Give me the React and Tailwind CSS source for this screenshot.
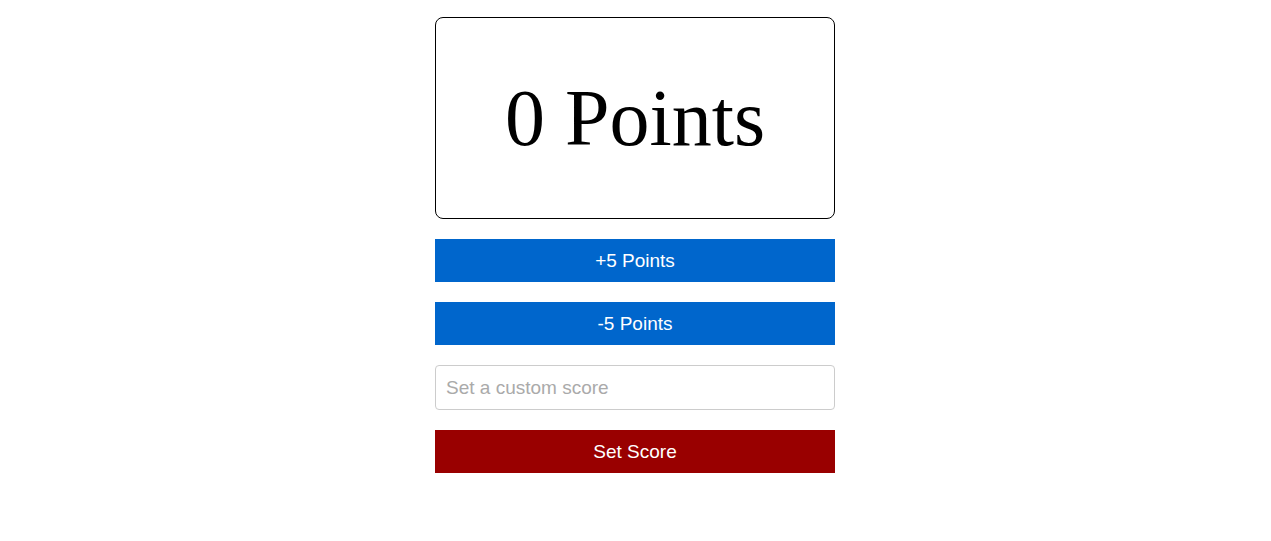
import React, { useState } from 'react';

export default function App() {
    const [score, setScore] = useState(0);
    const [custom, setCustom] = useState('');

    const btn = "w-full h-[43px] pt-[2px] flex items-center justify-center text-white text-[19px] font-['Liberation_Sans',Arial,sans-serif]";

    return (
        <div className="min-h-[541px] bg-white pr-px">
            <div className="w-[400px] mx-auto pt-[17px] flex flex-col gap-5">
                {/* Score display */}
                <div className="h-[202px] border border-black rounded-lg flex items-center justify-center">
                    <span className="text-[80px] leading-none text-black font-['Liberation_Serif','Times_New_Roman',serif]">
                        {score} Points
                    </span>
                </div>

                <button className={`${btn} bg-[#0066cc]`} onClick={() => setScore(score + 5)}>
                    +5 Points
                </button>
                <button className={`${btn} bg-[#0066cc]`} onClick={() => setScore(score - 5)}>
                    -5 Points
                </button>

                <input
                    type="text"
                    value={custom}
                    onChange={(e) => setCustom(e.target.value)}
                    placeholder="Set a custom score"
                    className="w-full h-[45px] px-[10px] border border-[#cccccc] rounded text-[19px] text-black placeholder:text-[#aaaaaa] outline-none font-['Liberation_Sans',Arial,sans-serif]"
                />

                <button
                    className={`${btn} bg-[#990000]`}
                    onClick={() => {
                        const n = parseInt(custom, 10);
                        if (!isNaN(n)) setScore(n);
                    }}
                >
                    Set Score
                </button>
            </div>
        </div>
    );
}
